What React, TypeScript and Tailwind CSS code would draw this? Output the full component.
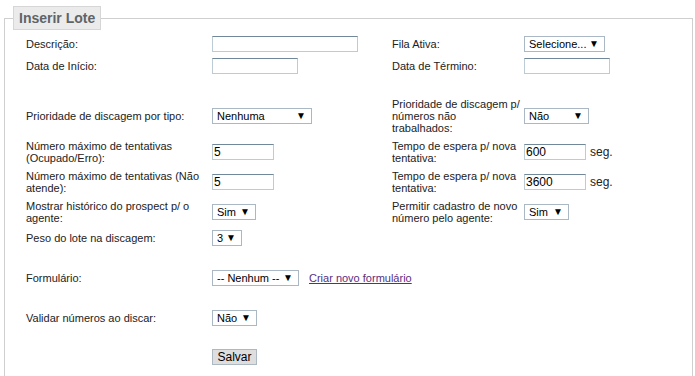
import type { ReactNode } from 'react';

const cols = 'grid grid-cols-[186px_180px_132px_1fr] items-center';

function TextBox({ width, value }: { width: string; value?: string }) {
  return (
    <div
      className={`${width} h-[16px] border border-[#bccbd4] border-t-[#71879a] bg-white pl-[1px] leading-[14px] text-[12px] text-black`}
    >
      {value}
    </div>
  );
}

function Select({ width, value }: { width: string; value: string }) {
  return (
    <div
      className={`${width} h-[16px] border border-[#a9b8c4] bg-white flex items-center justify-between pl-[4px] pr-[5px] text-[11px] leading-[14px] text-black`}
    >
      <span className="whitespace-nowrap">{value}</span>
      <span className="text-[10px] leading-none">▼</span>
    </div>
  );
}

function Label({ children }: { children: ReactNode }) {
  return <div className="leading-[12px] whitespace-nowrap">{children}</div>;
}

function Row({ h, children }: { h: string; children?: ReactNode }) {
  return <div className={`${cols} ${h}`}>{children}</div>;
}

export default function App() {
  return (
    <div className="w-[695px] h-[376px] overflow-hidden bg-white font-['Liberation_Sans',Arial,sans-serif] text-[11px] text-[#222]">
      <fieldset className="mt-[6px] ml-[4px] mr-[2px] h-[400px] border border-[#cfcfcf]">
        <legend className="ml-[8px] h-[24px] px-[5px] bg-[#ebebeb] border border-[#d6d6d6] text-[14px] font-bold text-[#5f6468] leading-[22px]">
          Inserir Lote
        </legend>

        <div className="pl-[21px] pt-[3px]">
          <Row h="h-[22px]">
            <Label>Descrição:</Label>
            <TextBox width="w-[146px]" />
            <Label>Fila Ativa:</Label>
            <Select width="w-[81px]" value="Selecione..." />
          </Row>
          <Row h="h-[22px]">
            <Label>Data de Início:</Label>
            <TextBox width="w-[86px]" />
            <Label>Data de Término:</Label>
            <TextBox width="w-[86px]" />
          </Row>
          <Row h="h-[19px]" />
          <Row h="h-[40px]">
            <Label>Prioridade de discagem por tipo:</Label>
            <Select width="w-[100px]" value="Nenhuma" />
            <Label>
              Prioridade de discagem p/
              <br />
              números não
              <br />
              trabalhados:
            </Label>
            <Select width="w-[65px]" value="Não" />
          </Row>
          <Row h="h-[31px]">
            <Label>
              Número máximo de tentativas
              <br />
              (Ocupado/Erro):
            </Label>
            <TextBox width="w-[62px]" value="5" />
            <Label>
              Tempo de espera p/ nova
              <br />
              tentativa:
            </Label>
            <div className="flex items-center gap-[4px]">
              <TextBox width="w-[62px]" value="600" />
              <span className="text-[12px]">seg.</span>
            </div>
          </Row>
          <Row h="h-[30px]">
            <Label>
              Número máximo de tentativas (Não
              <br />
              atende):
            </Label>
            <TextBox width="w-[62px]" value="5" />
            <Label>
              Tempo de espera p/ nova
              <br />
              tentativa:
            </Label>
            <div className="flex items-center gap-[4px]">
              <TextBox width="w-[62px]" value="3600" />
              <span className="text-[12px]">seg.</span>
            </div>
          </Row>
          <Row h="h-[30px]">
            <Label>
              Mostrar histórico do prospect p/ o
              <br />
              agente:
            </Label>
            <Select width="w-[44px]" value="Sim" />
            <Label>
              Permitir cadastro de novo
              <br />
              número pelo agente:
            </Label>
            <Select width="w-[45px]" value="Sim" />
          </Row>
          <Row h="h-[22px]">
            <Label>Peso do lote na discagem:</Label>
            <Select width="w-[30px]" value="3" />
          </Row>
          <Row h="h-[18px]" />
          <Row h="h-[22px]">
            <Label>Formulário:</Label>
            <div className="col-span-2 flex items-center gap-[10px]">
              <Select width="w-[87px]" value="-- Nenhum --" />
              <a href="#" className="text-[#5a2d82] underline whitespace-nowrap">
                Criar novo formulário
              </a>
            </div>
          </Row>
          <Row h="h-[18px]" />
          <Row h="h-[22px]">
            <Label>Validar números ao discar:</Label>
            <Select width="w-[45px]" value="Não" />
          </Row>
          <Row h="h-[17px]" />
          <Row h="h-[22px]">
            <div />
            <button className="w-[45px] h-[16px] bg-[#dedede] border border-[#adb9c2] text-[12px] leading-[14px] text-black">
              Salvar
            </button>
          </Row>
        </div>
      </fieldset>
    </div>
  );
}
